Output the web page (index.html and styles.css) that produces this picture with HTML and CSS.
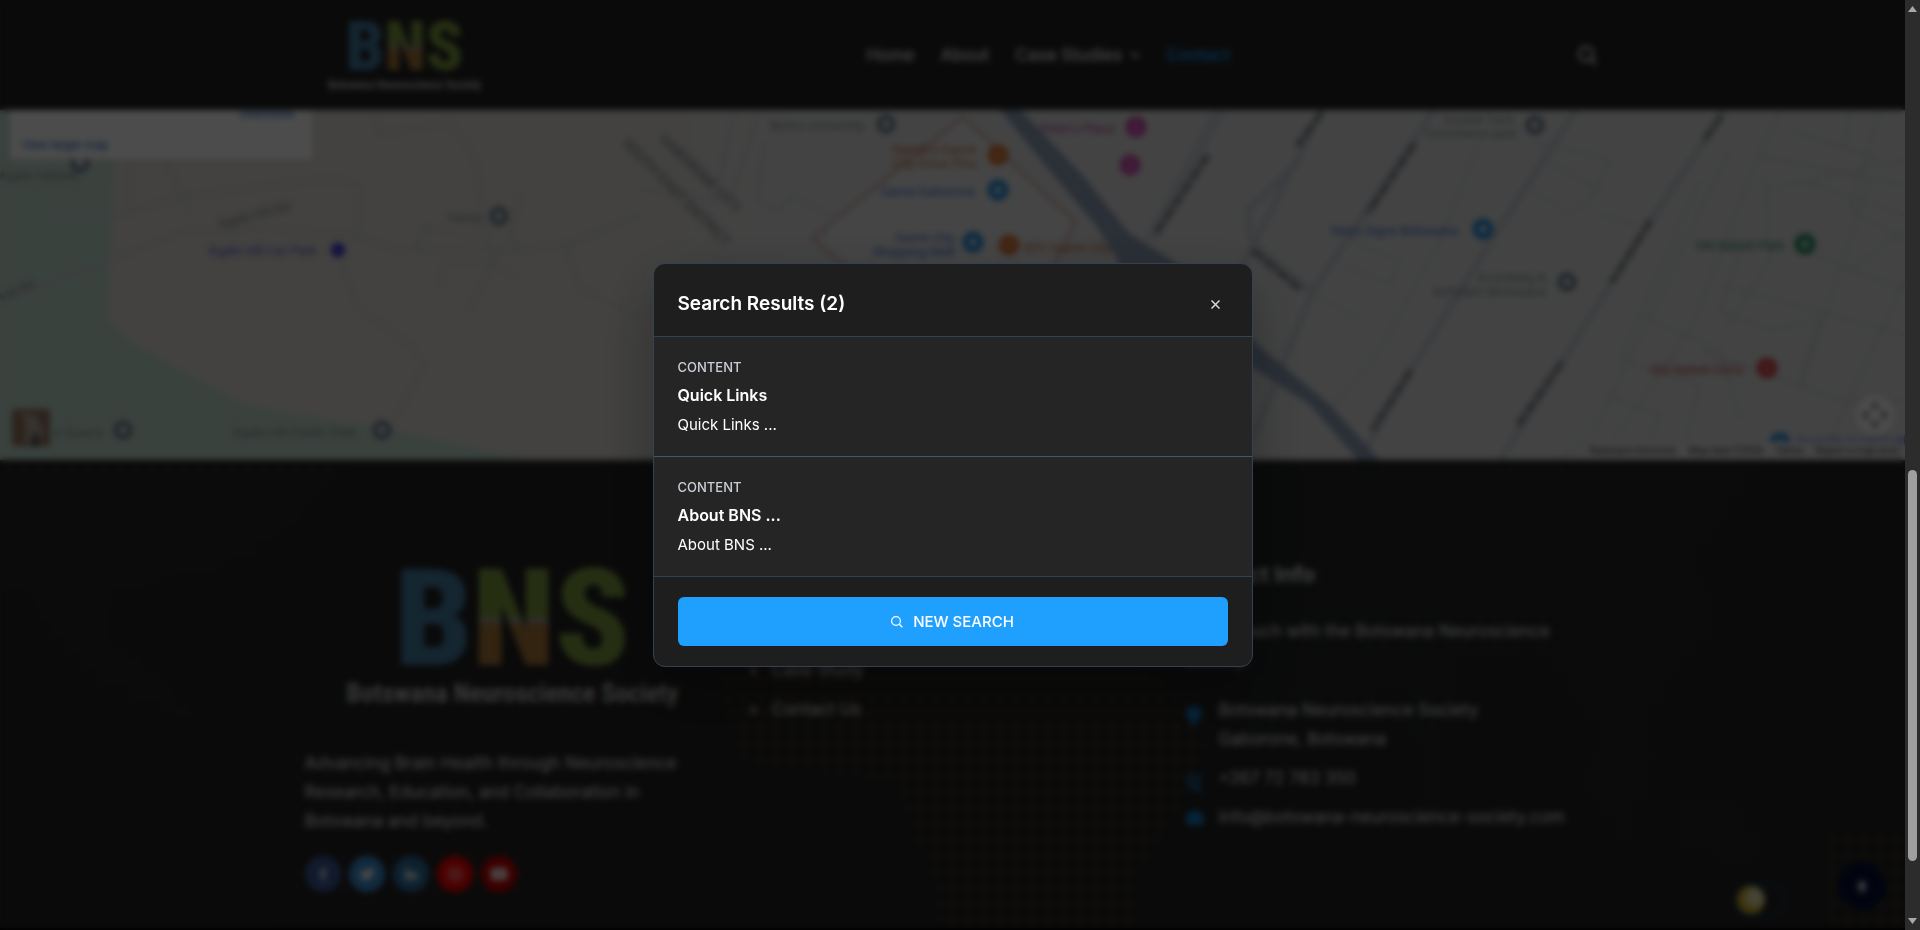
FILE: index.html
```html
<!DOCTYPE html>
<html lang="en">
<head>
<meta charset="utf-8">
<title>Botswana Neuroscience Society</title>
<link rel="stylesheet" href="styles.css">
</head>
<body>
<div class="page">
  <header class="header">
    <div class="container header-row">
      <a class="logo logo-small" href="#" aria-label="BNS home">
        <span class="logo-mark"><span class="b">B</span><span class="n">N</span><span class="s">S</span></span>
        <span class="logo-name">Botswana Neuroscience Society</span>
      </a>
      <nav class="nav">
        <a href="#">Home</a>
        <a href="#">About</a>
        <a href="#">Case Studies
          <svg width="10" height="6" viewBox="0 0 10 6"><path d="M1 1l4 4 4-4" fill="none" stroke="currentColor" stroke-width="2"/></svg></a>
        <a class="active" href="#">Contact</a>
      </nav>
      <button class="icon-button" type="button" aria-label="Search">
        <svg width="20" height="20" viewBox="0 0 20 20"><circle cx="9" cy="9" r="7" fill="none" stroke="currentColor" stroke-width="2.4"/><path d="M14 14l5 5" stroke="currentColor" stroke-width="2.6"/></svg>
      </button>
    </div>
  </header>

  <section class="map" aria-label="Map">
    <svg class="map-canvas" viewBox="0 110 1905 350" preserveAspectRatio="xMinYMin slice">
      <defs>
        <linearGradient id="land" x1="0" x2="1"><stop offset="0.3" stop-color="#dfdcd6"/><stop offset="0.42" stop-color="#e0e1e1"/></linearGradient>
      </defs>
      <rect y="110" width="1905" height="350" fill="url(#land)"/>
      <path d="M0 110H116L108 320L130 342L245 405L380 428L530 460H0z" fill="#c2dccf"/>
      <path d="M963 117L1075 222L1052 270H850L812 238z" fill="#e8e8e8" stroke="#d3abab" stroke-width="3"/>
      <g fill="none" stroke="#cfd2d6" stroke-width="3">
        <path d="M0 300L100 265L180 232L260 228L350 235L400 250L520 250L570 244L640 215"/>
        <path d="M50 213L130 212L190 195L330 179L360 184L357 232M128 160L130 210M165 160L180 190L190 212M340 260L358 308L410 345L424 365L395 420"/>
        <path d="M375 112L380 134L450 122L475 158L488 250M415 250L425 228L480 236M440 285L445 262L490 262L515 275M470 310L497 252M520 195L510 235L518 250M565 245L580 287L640 318"/>
        <path d="M735 110L715 200L640 190M760 110L730 200M757 200L780 212L790 195L835 218L820 240M757 200L765 140"/>
        <path d="M1530 140L1610 160L1590 200L1570 215L1533 190M1545 160L1600 190M1600 215L1635 225M1348 240L1400 260L1390 285L1345 265M1315 295L1360 320"/>
        <path d="M1780 110L1755 165L1690 330L1600 460M1755 155L1905 185M1765 175L1770 260L1725 330M1800 180L1905 215M1720 285L1905 335M1790 130L1880 160M1880 110L1850 210L1905 240M1850 110L1845 145M1700 350L1840 400L1905 400M1765 190L1905 160M1800 250L1905 290M1870 180L1800 390M1905 280L1830 440M1640 315L1720 350L1740 420M1620 360L1700 385L1680 460M1605 395L1660 415L1640 460M1740 250L1720 310L1770 330L1820 320L1800 380M1905 230L1850 270"/>
        <path d="M1480 140L1440 240L1380 350L1330 410M1730 150L1600 420L1560 460M1700 180L1620 360"/>
      </g>
      <g fill="none" stroke="#c5cad3" stroke-width="6">
        <path d="M1322 110L1215 320"/>
        <path d="M1434 110L1312 292L1252 440M1312 292L1250 240L1248 210L1300 160"/>
        <path d="M1576 110L1500 227L1411 370L1360 460"/>
        <path d="M1725 110L1651 220L1562 362L1500 460"/>
      </g>
      <path d="M1220 110L1150 240" stroke="#cdd2da" stroke-width="12"/>
      <path d="M1000 110H1021L1085 178L1128 232L1176 263L1252 340L1330 405L1380 460H1358L1310 405L1240 360L1126 275L1098 228L1045 165z" fill="#8f9fb8"/>
      <g class="road-labels">
        <path d="M1322 112L1297 146M1415 143L1368 213M1411 370L1372 430M1722 115L1703 142M1651 220L1611 283M1562 362L1518 425M1208 155L1155 235M1252 250L1301 290"/>
      </g>
      <g class="place">
        <text class="area" transform="translate(659 140) rotate(44)">GABORONE CITY</text>
        <text class="area" transform="translate(622 144) rotate(45)">SOUTH EAST DISTRICT</text>
        <text transform="translate(220 228) rotate(-14)">Kgale Hill Rd</text>
        <text transform="translate(-30 318) rotate(-26)">Kgale Hill Rd</text>
        <text x="0" y="180">Kgale Hillside</text>
        <text x="448" y="222">Homy</text>
        <text x="55" y="437">e Quarry</text>
        <text x="233" y="437">Kgale Hill Public Park</text>
        <text x="770" y="130">Botho University</text>
        <text x="1443" y="124">Crystal Tech</text>
        <text x="1425" y="138">Commerce park</text>
        <text x="1478" y="282">Krumberg &amp;</text>
        <text x="1433" y="296">Schubert Botswana</text>
        <text class="indigo" x="209" y="255">Kgale Hill Car Park</text>
        <text class="blue" x="881" y="196">Game Gaborone</text>
        <text class="blue" x="895" y="242">Game City</text>
        <text class="blue" x="872" y="256">Shopping Mall</text>
        <text class="blue" x="1331" y="235">Neon Signs Botswana</text>
        <text class="blue" x="1797" y="445">Favorite Supermarket</text>
        <text class="orange" x="893" y="154">Nando's Game</text>
        <text class="orange" x="893" y="168">City Drive-Thru</text>
        <text class="orange" x="1024" y="252">KFC Game City</text>
        <text class="pink" x="1040" y="133">Peter's Place</text>
        <text class="green" x="1695" y="250">Old Naledi Park</text>
        <text class="red" x="1650" y="374">Old Naledi Clinic</text>
      </g>
      <g fill="#e4e6e8" stroke="#66798a" stroke-width="5">
        <circle cx="80" cy="163" r="7"/><circle cx="499" cy="216" r="7"/><circle cx="123" cy="430" r="7"/><circle cx="382" cy="430" r="7"/><circle cx="886" cy="124" r="7"/><circle cx="1535" cy="125" r="7"/><circle cx="1567" cy="282" r="7"/>
      </g>
      <g fill="#fff" stroke-width="7">
        <circle cx="338" cy="250" r="4" stroke="#4a3fd8"/>
        <g stroke="#d8752f"><circle cx="998" cy="155" r="7"/><circle cx="1009" cy="245" r="7"/></g>
        <g stroke="#1f88d8"><circle cx="998" cy="190" r="7"/><circle cx="973" cy="242" r="7"/><circle cx="1483" cy="229" r="7"/><circle cx="1780" cy="443" r="7"/></g>
        <g stroke="#d04ab0"><circle cx="1136" cy="127" r="7"/><circle cx="1130" cy="165" r="7"/></g>
        <circle cx="1805" cy="244" r="7" stroke="#1c8a5a"/>
        <circle cx="1767" cy="368" r="7" stroke="#d8444a"/>
      </g>
      <g fill="none" stroke-width="4">
        <path d="M998 151v8M1009 241v8" stroke="#d8752f"/>
        <path d="M1132 127h8M1126 165h8" stroke="#d04ab0"/>
        <path d="M1763 368h8" stroke="#d8444a"/>
      </g>
      <circle cx="1875" cy="415" r="19" fill="#fff"/>
      <path d="M1875 402l5 6h-10zM1875 428l5-6h-10zM1862 415l6-5v10zM1888 415l-6-5v10z" fill="#666"/>
      <rect x="12" y="409" width="38" height="37" rx="3" fill="#95745f"/>
      <path d="M22 412l14 4 8 14-4 14-16-2 2-14z" fill="#b9a99c"/><path d="M30 446l6-16 4 16z" fill="#4c4540"/>
    </svg>
    <div class="map-card">
      <a class="directions" href="#">Directions</a>
      <a href="#">View larger map</a>
    </div>
    <div class="map-terms">
      <button type="button">Keyboard shortcuts</button><span>Map data ©2026</span><a href="#">Terms</a><a href="#">Report a map error</a>
    </div>
  </section>

  <footer class="footer">
    <svg class="footer-dots" viewBox="0 460 1905 470" preserveAspectRatio="xMinYMin slice" aria-hidden="true">
      <defs>
        <pattern id="dg" width="16" height="16" patternUnits="userSpaceOnUse"><circle cx="8" cy="8" r="5" fill="#272a2a"/></pattern>
        <pattern id="db" width="16" height="16" patternUnits="userSpaceOnUse"><circle cx="8" cy="8" r="5" fill="#22292c"/></pattern>
        <pattern id="dr" width="16" height="16" patternUnits="userSpaceOnUse"><circle cx="8" cy="8" r="5" fill="#2c2323"/></pattern>
        <pattern id="do" width="16" height="16" patternUnits="userSpaceOnUse"><circle cx="8" cy="8" r="5" fill="#352d23"/></pattern>
      </defs>
      <path d="M0 464H350L290 530L250 560L192 580L120 592L112 640L170 680L210 740L180 720L90 680L50 640L30 600L0 590z" fill="url(#dg)"/>
      <path d="M220 760L270 730L370 735L450 780L480 820L570 860L560 928H270L235 850z" fill="url(#dr)"/>
      <path d="M704 650H1130L1180 700L1210 750L1176 820L1130 880L1145 930H936L936 880L905 820L900 780L830 776L740 760L725 700z" fill="url(#do)"/>
      <path d="M1250 464H1760L1700 560L1720 620L1660 700L1640 760L1600 740L1540 650L1460 660L1430 830L1400 690L1250 740z" fill="url(#db)"/>
      <path d="M1580 770L1640 690L1660 760L1625 850L1590 800zM1670 800L1730 790L1770 850L1740 870L1670 840z" fill="url(#db)"/>
      <path d="M1830 830H1905V928H1830z" fill="url(#do)"/>
    </svg>
    <div class="container footer-grid">
      <div class="col">
        <div class="logo logo-large">
          <span class="logo-mark"><span class="b">B</span><span class="n">N</span><span class="s">S</span></span>
          <span class="logo-name">Botswana Neuroscience Society</span>
        </div>
        <p class="about">Advancing Brain Health through Neuroscience Research, Education, and Collaboration in Botswana and beyond.</p>
        <div class="socials">
          <a class="fb" href="#" aria-label="Facebook"><svg width="14" height="14" viewBox="0 0 14 14"><path d="M6 14V8H4V5.500H6V4Q6 1 9 1H10V3.500H9Q8.500 3.500 8.500 4.500V5.500H10L9.800 8H8.500V14z" fill="#fff"/></svg></a>
          <a class="tw" href="#" aria-label="Twitter"><svg width="16" height="14" viewBox="0 0 16 14"><path d="M1 2q3 3 7 3 0-4 3.500-4 1.500 0 2.500 1l2-.5-1.500 2Q14 12 6 13q-3 0-5-1.500 3 0 4-1.500-3-.5-3-3Q1 5 1 2z" fill="#fff"/></svg></a>
          <a class="li" href="#" aria-label="LinkedIn"><svg width="14" height="14" viewBox="0 0 14 14"><path d="M1 5h3v8H1zM1 1h3v3H1zM5 5h3v1q3-3 5 1v6h-3V8.500q-1-2-2 0V13H5z" fill="#fff"/></svg></a>
          <a class="ig" href="#" aria-label="Instagram"><svg width="14" height="14" viewBox="0 0 14 14"><rect x="1" y="1" width="12" height="12" rx="3" fill="none" stroke="#fff" stroke-width="1.200"/><circle cx="7" cy="7" r="3" fill="none" stroke="#fff" stroke-width="1.200"/></svg></a>
          <a class="yt" href="#" aria-label="YouTube"><svg width="16" height="12" viewBox="0 0 16 12"><rect width="16" height="12" rx="3" fill="#fff"/><path d="M6 3.500l5 2.500-5 2.500z" fill="#c00"/></svg></a>
        </div>
      </div>
      <div class="col">
        <h2>Quick Links</h2>
        <ul class="links">
          <li><a href="#">About Us</a></li>
          <li><a href="#">Case Study</a></li>
          <li><a href="#">Contact Us</a></li>
        </ul>
      </div>
      <div class="col">
        <h2>Contact Info</h2>
        <p class="touch">Get in touch with the Botswana Neuroscience Society.</p>
        <ul class="contacts">
          <li><svg width="18" height="22" viewBox="0 0 18 22"><path d="M9 21Q1 12 1 8a8 7 0 0 1 16 0q0 4-8 13z" fill="currentColor"/></svg><span>Botswana Neuroscience Society<br>Gaborone, Botswana</span></li>
          <li><svg width="18" height="20" viewBox="0 0 18 22"><path d="M2 3l4-1 2 5-2 2q2 4 5 6l3-2 3 4-2 3Q2 17 2 3zM12 3v5h5M17 2l-5 6" fill="none" stroke="currentColor" stroke-width="2"/></svg><a href="#">+267 72 783 350</a></li>
          <li><svg width="20" height="18" viewBox="0 0 20 18"><path d="M1 7l9-6 9 6v10H1z" fill="currentColor"/></svg><a href="#">info@botswana-neuroscience-society.com</a></li>
        </ul>
      </div>
    </div>
    <button class="theme-toggle" type="button" aria-label="Toggle theme"><span></span></button>
    <button class="to-top" type="button" aria-label="Back to top"><svg width="12" height="14" viewBox="0 0 12 14"><path d="M6 1l5 7H8v5H4V8H1z" fill="#fff"/></svg></button>
  </footer>

  <div class="overlay">
    <div class="modal" role="dialog" aria-labelledby="results-title">
      <div class="modal-head">
        <h3 id="results-title">Search Results (2)</h3>
        <button class="close" type="button" aria-label="Close"><svg width="9" height="9" viewBox="0 0 9 9"><path d="M0.500 0.500l8 8M8.500 0.500l-8 8" stroke="currentColor" stroke-width="1.500"/></svg></button>
      </div>
      <a class="result" href="#"><span class="kind">CONTENT</span><strong>Quick Links</strong><span>Quick Links ...</span></a>
      <a class="result" href="#"><span class="kind">CONTENT</span><strong>About BNS ...</strong><span>About BNS ...</span></a>
      <div class="modal-foot">
        <button class="new-search" type="button">
          <svg width="12" height="12" viewBox="0 0 12 12"><circle cx="5" cy="5" r="4.400" fill="none" stroke="currentColor" stroke-width="1.200"/><path d="M8.300 8.300l3 3" stroke="currentColor" stroke-width="1.400"/></svg>
          NEW SEARCH</button>
      </div>
    </div>
  </div>
</div>
<div class="scrollbar" aria-hidden="true">
  <svg width="9" height="6" viewBox="0 0 9 6"><path d="M4.500 0L9 6H0z" fill="#a8a8a8"/></svg>
  <div class="track"><div class="thumb"></div></div>
  <svg width="9" height="6" viewBox="0 0 9 6"><path d="M4.500 6L9 0H0z" fill="#a8a8a8"/></svg>
</div>
</body>
</html>
```
FILE: styles.css
```css
* { box-sizing: border-box; }

body {
  margin: 0;
  display: flex;
  height: 100vh;
  overflow: hidden;
  background: #222;
  color: #e6e6e6;
  font: 17px/29px Inter, "Open Sans", sans-serif;
}

a { color: inherit; text-decoration: none; }
button { border: 0; padding: 0; background: none; color: inherit; font: inherit; cursor: pointer; }
h2, h3, p, ul { margin: 0; padding: 0; }
ul { list-style: none; }

.page {
  position: relative;
  flex: 1;
  display: flex;
  flex-direction: column;
  overflow: hidden;
}

.container {
  width: 100%;
  max-width: 1320px;
  margin: 0 auto;
  padding: 0 12px;
}

/* Header */
.header { flex: none; background: #222; }
.header-row { display: flex; align-items: center; height: 110px; padding: 0 16px 0 32px; }
.nav { display: flex; gap: 26px; margin: 0 auto 0 382px; font-size: 17px; font-weight: 500; }
.nav a { display: flex; align-items: center; gap: 8px; }
.nav a.active { color: #1fa0ff; }
.icon-button { display: flex; }

/* Logo */
.logo { display: flex; flex-direction: column; align-items: center; font-family: "Roboto Condensed", "Liberation Sans Narrow", Roboto, sans-serif; font-weight: 900; }
.logo-mark { display: flex; }
.logo-mark .b { color: #447fa2; }
.logo-mark .s { color: #7f9c3f; }
.logo-mark .n {
  background: linear-gradient(#7f9c3f 49%, #9a9a9a 49%, #9a9a9a 53%, #a87838 53%);
  -webkit-background-clip: text;
  background-clip: text;
  color: transparent;
}
.logo-name { white-space: nowrap; color: #c4c4c4; font-weight: 600; }
.logo-small .logo-mark { font-size: 68px; line-height: 60px; }
.logo-small { width: 160px; }
.logo-small .logo-name { font-size: 12px; line-height: 16px; }
.logo-large .logo-mark { font-size: 136px; line-height: 122px; }
.logo-large .logo-name { font-size: 26px; line-height: 26px; }

/* Map */
.map { position: relative; flex: none; height: 350px; overflow: hidden; }
.map-canvas { display: block; width: 100%; height: 100%; }
.place text { font: 400 13px Roboto, sans-serif; fill: #858c94; }
.place .area { font-size: 14px; fill: #707478; }
.place .indigo { fill: #5a60d0; }
.place .blue { fill: #4272d0; }
.place .orange { fill: #bf6a35; }
.place .pink { fill: #b8489c; }
.place .green { fill: #2f8562; }
.place .red { fill: #c04a50; }
.road-labels { fill: none; stroke: #85878c; stroke-width: 6; stroke-dasharray: 14 2; }
.map-card {
  position: absolute;
  top: -10px;
  left: 10px;
  width: 302px;
  display: flex;
  flex-direction: column;
  padding: 4px 18px 4px 12px;
  background: #fff;
  color: #1a66cc;
  font: 12px/20px Roboto, sans-serif;
}
.map-card .directions { align-self: flex-end; margin-bottom: 11px; }
.map-terms {
  position: absolute;
  right: 6px;
  bottom: 0;
  display: flex;
  gap: 12px;
  background: #e6e6e6;
  color: #333;
  font: 10px/18px Roboto, sans-serif;
}

/* Footer */
.footer { position: relative; flex: 1; border-bottom: 2px solid #000; }
.footer-dots { position: absolute; inset: 0; width: 100%; height: 100%; }
.footer-grid {
  position: relative;
  display: grid;
  grid-template-columns: repeat(3, 1fr);
  gap: 24px;
  padding-top: 98px;
}
.footer h2 { font-size: 22px; line-height: 32px; font-weight: 600; }
.about { margin-top: 43px; }
.socials { display: flex; gap: 8px; margin-top: 20px; }
.socials a { display: flex; align-items: center; justify-content: center; width: 36px; height: 36px; border-radius: 50%; }
.fb { background: #3b5998; }
.tw { background: #3a8fd0; }
.li { background: #2a6f9f; }
.ig { background: #f00; }
.yt { background: #cc0000; }
.links { margin-top: 27px; }
.links li { display: flex; margin-bottom: 10px; padding-left: 5px; }
.links li::before { content: "›"; width: 22px; font-weight: 700; }
.touch { margin-top: 27px; }
.contacts { display: flex; flex-direction: column; gap: 10px; margin-top: 21px; }
.contacts li { display: flex; gap: 16px; }
.contacts svg { flex: none; margin-top: 9px; color: #1577bd; }
.contacts li:last-child { gap: 14px; }
.contacts li:last-child svg { margin-top: 5px; }
.theme-toggle {
  position: absolute;
  right: 118px;
  bottom: 12px;
  width: 52px;
  height: 32px;
  border: 2px solid #16425c;
  border-radius: 16px;
}
.theme-toggle span { display: block; width: 28px; height: 28px; border-radius: 50%; background: radial-gradient(circle at 65% 40%, #e8e0b0 30%, #c8ae28 50%); }
.to-top {
  position: absolute;
  right: 19px;
  bottom: 18px;
  display: flex;
  align-items: center;
  justify-content: center;
  width: 48px;
  height: 48px;
  border-radius: 50%;
  background: #060f35;
}

/* Search results dialog */
.overlay {
  position: absolute;
  inset: 0;
  display: flex;
  align-items: center;
  justify-content: center;
  background: rgba(0, 0, 0, 0.7);
  backdrop-filter: blur(3px);
}
.modal {
  width: 600px;
  max-width: 90%;
  overflow: hidden;
  border: 1px solid #334155;
  border-radius: 12px;
  background: #1e1e1e;
  color: #fff;
  box-shadow: 0 20px 60px rgba(0, 0, 0, 0.3);
}
.modal-head { display: flex; align-items: center; justify-content: space-between; padding: 24px 24px 16px; border-bottom: 1px solid #334155; }
.modal-head h3 { font-size: 19px; line-height: 32px; font-weight: 600; }
.close { display: flex; align-items: center; justify-content: center; width: 24px; height: 32px; color: #d6d9de; }
.result { display: flex; flex-direction: column; padding: 20px 24px 19px; border-bottom: 1px solid #475569; background: #252525; font-size: 15px; line-height: 24px; }
.result + .result { border-color: #334155; }
.kind { margin-bottom: 5px; color: #cbd0d8; font-size: 13px; line-height: 21px; font-weight: 500; }
.result strong { margin-bottom: 6px; font-size: 16px; font-weight: 600; }
.modal-foot { padding: 20px 24px; }
.new-search {
  display: flex;
  align-items: center;
  justify-content: center;
  gap: 10px;
  width: 100%;
  padding: 12px;
  border-radius: 6px;
  background: #1fa0ff;
  color: #fff;
  font-size: 15px;
  line-height: 25px;
  font-weight: 500;
}

/* Window scrollbar */
.scrollbar { flex: none; display: flex; flex-direction: column; align-items: center; width: 15px; padding: 6px 0; background: #2c2c2c; }
.track { flex: 1; display: flex; flex-direction: column; justify-content: flex-end; width: 9px; padding-bottom: 57px; }
.thumb { height: 46%; border-radius: 5px; background: #9f9f9f; }
```
